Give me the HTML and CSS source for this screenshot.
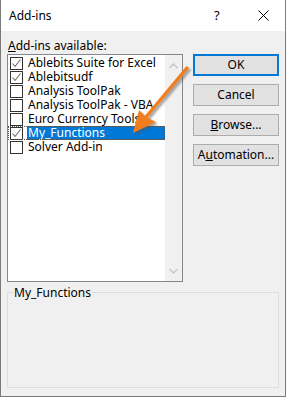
FILE: index.html
```html
<!DOCTYPE html>
<html>
<head>
<meta charset="utf-8">
<link rel="stylesheet" href="styles.css">
</head>
<body>
<div class="window">
  <div class="titlebar">
    <span class="title">Add-ins</span>
    <span class="help">?</span>
    <svg class="close" width="11" height="11" viewBox="0 0 11 11"><path d="M0.5 0.5 L10.5 10.5 M10.5 0.5 L0.5 10.5" stroke="#000" stroke-width="1" fill="none"/></svg>
  </div>
  <div class="client">
    <div class="label"><u>A</u>dd-ins available:</div>
    <div class="main">
      <div class="listbox">
        <div class="items">
          <div class="item"><span class="cb checked"><svg width="11" height="11" viewBox="0 0 11 11"><path d="M1.5 5.5 L4 8.5 L9.5 1.5" stroke="#6b6b6b" stroke-width="1.1" fill="none"/></svg></span><span class="text">Ablebits Suite for Excel</span></div>
          <div class="item"><span class="cb checked"><svg width="11" height="11" viewBox="0 0 11 11"><path d="M1.5 5.5 L4 8.5 L9.5 1.5" stroke="#6b6b6b" stroke-width="1.1" fill="none"/></svg></span><span class="text">Ablebitsudf</span></div>
          <div class="item"><span class="cb"></span><span class="text">Analysis ToolPak</span></div>
          <div class="item"><span class="cb"></span><span class="text">Analysis ToolPak - VBA</span></div>
          <div class="item"><span class="cb"></span><span class="text">Euro Currency Tools</span></div>
          <div class="item focused"><span class="cb checked"><svg width="11" height="11" viewBox="0 0 11 11"><path d="M1.5 5.5 L4 8.5 L9.5 1.5" stroke="#6b6b6b" stroke-width="1.1" fill="none"/></svg></span><span class="text selected">My_Functions</span></div>
          <div class="item"><span class="cb"></span><span class="text">Solver Add-in</span></div>
        </div>
        <div class="scrollbar">
          <svg width="9" height="6" viewBox="0 0 9 6"><path d="M0.5 5 L4.5 1 L8.5 5" stroke="#c5c5c5" stroke-width="1.4" fill="none"/></svg>
          <svg width="9" height="6" viewBox="0 0 9 6"><path d="M0.5 1 L4.5 5 L8.5 1" stroke="#c5c5c5" stroke-width="1.4" fill="none"/></svg>
        </div>
      </div>
      <div class="buttons">
        <div class="btn default">OK</div>
        <div class="btn">Cancel</div>
        <div class="btn"><u>B</u>rowse...</div>
        <div class="btn">A<u>u</u>tomation...</div>
      </div>
    </div>
    <div class="group">
      <span class="legend">My_Functions</span>
    </div>
  </div>
  <svg class="arrow" width="287" height="398" viewBox="0 0 287 398">
    <defs>
      <filter id="sh" x="-50%" y="-50%" width="200%" height="200%">
        <feGaussianBlur stdDeviation="1.3"/>
      </filter>
    </defs>
    <g transform="translate(2,2)" opacity="0.55" filter="url(#sh)">
      <path d="M187 68 L146 117" stroke="#555" stroke-width="3.5" stroke-linecap="round" fill="none"/>
      <path d="M133 133 L139 110 L146 117 L156 122 Z" fill="#555"/>
    </g>
    <path d="M187 68 L146 117" stroke="#f07d1e" stroke-width="3.5" stroke-linecap="round" fill="none"/>
    <path d="M133 133 L139 110 L146 117 L156 122 Z" fill="#f07d1e"/>
  </svg>
</div>
</body>
</html>
```

FILE: styles.css
```css
html, body {
  margin: 0;
  padding: 0;
  background: #ffffff;
}
body {
  width: 287px;
  height: 398px;
  font-family: "Noto Sans", "Segoe UI", sans-serif;
  font-size: 12px;
  color: #000;
  position: relative;
  overflow: hidden;
}
.window {
  width: 284px;
  height: 396px;
  border: 1px solid #7a7a7a;
  border-top: none;
  background: #f0f0f0;
  display: flex;
  flex-direction: column;
}
.titlebar {
  height: 31px;
  background: #ffffff;
  display: flex;
  align-items: center;
  padding-left: 8px;
  box-sizing: border-box;
}
.title {
  flex: 1;
  font-size: 12px;
  margin-top: -1px;
}
.help {
  font-size: 13px;
  width: 44px;
  margin-top: -2px;
}
.close {
  margin-right: 16px;
  margin-top: -1px;
}
.client {
  padding: 7px 6px 0 6px;
  flex: 1;
}
.label {
  height: 15px;
  line-height: 15px;
  margin-left: 1px;
}
.main {
  display: flex;
  margin-top: 1px;
  gap: 10px;
}
.listbox {
  width: 174px;
  height: 226px;
  border: 1px solid #828790;
  background: #ffffff;
  display: flex;
}
.items {
  flex: 1;
  padding-top: 1px;
}
.item {
  height: 14px;
  display: flex;
  align-items: center;
  padding-left: 2px;
}
.item.focused {
  outline: 1px dotted #555;
  outline-offset: -1px;
}
.cb {
  width: 11px;
  height: 11px;
  border: 1px solid #333;
  background: #fff;
  display: flex;
  margin-right: 4px;
}
.text {
  flex: 1;
  height: 14px;
  line-height: 14px;
  padding-left: 1px;
  white-space: nowrap;
}
.text.selected {
  background: #0078d7;
  color: #fff;
}
.scrollbar {
  width: 17px;
  background: #f0f0f0;
  display: flex;
  flex-direction: column;
  justify-content: space-between;
  align-items: center;
  padding: 8px 0 7px 0;
  box-sizing: border-box;
}
.buttons {
  display: flex;
  flex-direction: column;
  gap: 8px;
}
.btn {
  width: 84px;
  height: 20px;
  border: 1px solid #adadad;
  background: #e1e1e1;
  text-align: center;
  line-height: 20px;
}
.btn.default {
  border: 2px solid #0078d7;
  width: 82px;
  height: 18px;
  line-height: 18px;
}
.group {
  margin-top: 10px;
  height: 94px;
  border: 1px solid #dcdcdc;
  position: relative;
}
.legend {
  position: absolute;
  left: 5px;
  top: -8px;
  background: #f0f0f0;
  padding: 0 1px;
  line-height: 15px;
}
.arrow {
  position: absolute;
  left: 0;
  top: 0;
  pointer-events: none;
}
```
